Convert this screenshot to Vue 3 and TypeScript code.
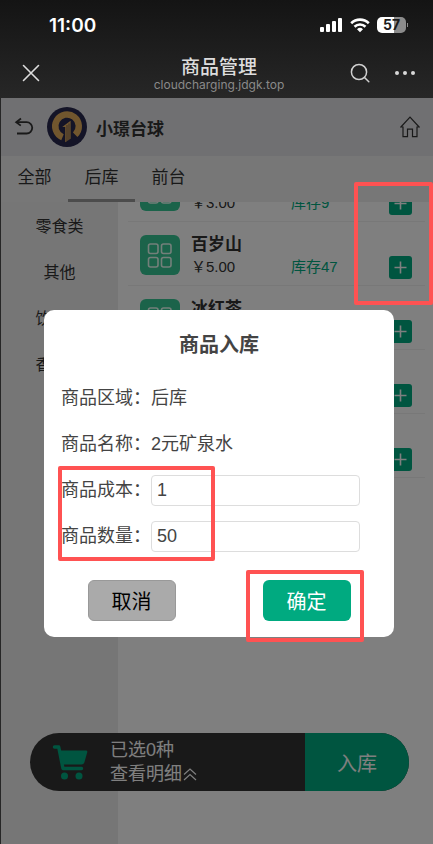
<script setup lang="ts">
import { ref } from 'vue'

interface Product {
  name: string
  price: string
  stock: number
}

const tabs: string[] = ['全部', '后库', '前台']
const activeTab = ref('后库')
const categories: string[] = ['零食类', '其他', '饮料类', '香烟类']
const products: Product[] = [
  { name: '矿泉水', price: '3.00', stock: 9 },
  { name: '百岁山', price: '5.00', stock: 47 },
  { name: '冰红茶', price: '5.00', stock: 20 },
  { name: '可乐', price: '5.00', stock: 20 },
  { name: '雪碧', price: '5.00', stock: 20 },
]
const cost = ref('1')
const quantity = ref('50')
</script>

<template>
  <div class="screen">
    <header class="chrome">
      <div class="status">
        <span class="time">11:00</span>
        <div class="indicators">
          <svg width="24" height="16" viewBox="0 0 24 16" fill="#fff">
            <rect x="1" y="10" width="4" height="5" rx="1" />
            <rect x="7" y="7" width="4" height="8" rx="1" />
            <rect x="13" y="4" width="4" height="11" rx="1" />
            <rect x="19" y="1" width="4" height="14" rx="1" />
          </svg>
          <svg width="20" height="16" viewBox="0 0 20 16" fill="none" stroke="#fff" stroke-width="2.6">
            <path d="M1.2 6.2a12.6 12.6 0 0 1 17.6 0" />
            <path d="M4.5 9.7a7.9 7.9 0 0 1 11 0" />
            <path d="M7 12.2a4.4 4.4 0 0 1 6 0L10 15.2z" fill="#fff" stroke="none" />
          </svg>
          <span class="battery"><span class="level">57</span></span>
        </div>
      </div>
      <div class="nav">
        <button class="plain" aria-label="关闭">
          <svg width="18" height="18" viewBox="0 0 18 18" stroke="#ddd" stroke-width="1.6" stroke-linecap="round">
            <path d="M1.5 1.5l15 15M16.5 1.5l-15 15" />
          </svg>
        </button>
        <div class="heading">
          <h1>商品管理</h1>
          <p>cloudcharging.jdgk.top</p>
        </div>
        <div class="nav-actions">
          <button class="plain" aria-label="搜索">
            <svg width="20" height="20" viewBox="0 0 20 20" fill="none" stroke="#d0d0d0" stroke-width="1.5" stroke-linecap="round">
              <circle cx="9" cy="9" r="7.6" />
              <path d="M14.5 14.5l4.3 4.3" />
            </svg>
          </button>
          <button class="plain" aria-label="更多">
            <svg width="22" height="20" viewBox="0 0 22 20" fill="#d8d8d8">
              <circle cx="3" cy="10" r="2" />
              <circle cx="11" cy="10" r="2" />
              <circle cx="19" cy="10" r="2" />
            </svg>
          </button>
        </div>
      </div>
    </header>

    <main class="page">
      <div class="shop">
        <button class="plain" aria-label="返回">
          <svg width="20" height="20" viewBox="0 0 20 20" fill="none" stroke="#333" stroke-width="1.8">
            <path d="M7 1.5L2.2 5.2l4.6 3.4" />
            <path d="M2.2 5.2h10.4a5.6 5.6 0 0 1 0 11.3H3" />
          </svg>
        </button>
        <svg class="logo" width="40" height="40" viewBox="0 0 40 40">
          <circle cx="20" cy="20" r="20" fill="#28284e" />
          <path d="M15.5 30.2A11.8 11.8 0 1 1 28.2 27.8" fill="none" stroke="#e2ad5c" stroke-width="6.4" />
          <path d="M14.6 19.4L24.6 12v19.5l-7 5V20.6z" fill="#28284e" />
          <path d="M15.2 20L23.6 13.8v18l-5.4 3.4V20z" fill="#e2ad5c" />
          <path d="M20 18v16M22 16.5v16.5" stroke="#28284e" stroke-width="0.6" />
        </svg>
        <strong>小璟台球</strong>
        <a class="home" href="#" aria-label="首页">
          <svg width="20" height="22" viewBox="0 0 20 22" fill="none" stroke="#333" stroke-width="1.2">
            <path d="M3 11H0.9L10 1.2 19.1 11H17v9.7h-4.5v-7.5h-5v7.5H3z" />
          </svg>
        </a>
      </div>

      <nav class="tabs">
        <button v-for="tab in tabs" :key="tab" :class="{ active: tab === activeTab }" @click="activeTab = tab">{{ tab }}</button>
      </nav>

      <div class="content">
        <ul class="categories">
          <li v-for="category in categories" :key="category">{{ category }}</li>
        </ul>
        <div class="viewport">
          <ul class="products">
            <li v-for="product in products" :key="product.name">
              <svg class="thumb" width="40" height="40" viewBox="0 0 40 40" fill="none">
                <rect width="40" height="40" rx="6" fill="#36c694" />
                <g stroke="#e8fff5" stroke-width="1.6">
                  <rect x="8.5" y="9" width="9.5" height="9.5" rx="2" />
                  <rect x="21.5" y="9" width="9.5" height="9.5" rx="2" />
                  <rect x="8.5" y="22.5" width="9.5" height="9.5" rx="2" />
                  <rect x="21.5" y="22.5" width="9.5" height="9.5" rx="2" />
                </g>
              </svg>
              <div class="info">
                <strong>{{ product.name }}</strong>
                <div class="figures">
                  <span>￥{{ product.price }}</span>
                  <span class="stock">库存{{ product.stock }}</span>
                </div>
              </div>
              <button class="add" aria-label="入库">
                <svg width="13" height="13" viewBox="0 0 13 13" stroke="#fff" stroke-width="1.6">
                  <path d="M6.5 0.5v12M0.5 6.5h12" />
                </svg>
              </button>
            </li>
          </ul>
        </div>
      </div>

      <footer class="cart">
        <svg width="36" height="36" viewBox="0 0 36 36">
          <path d="M2.5 3h4.2L11 24.5h18.5" fill="none" stroke="#00aa80" stroke-width="3.4" stroke-linecap="round" stroke-linejoin="round" />
          <path d="M7 6.5h27q1.6 0 1.3 1.6L32.5 18q-.8 2.5-3 2.5H10z" fill="#00aa80" />
          <circle cx="12.5" cy="32" r="3.5" fill="#00aa80" />
          <circle cx="27" cy="32" r="3.5" fill="#00aa80" />
        </svg>
        <div class="summary">
          <span>已选0种</span>
          <a href="#">查看明细<svg width="14" height="14" viewBox="0 0 14 14" fill="none" stroke="#fff" stroke-width="1.2">
            <path d="M1 7.5L7 2l6 5.5M1 13l6-5.5 6 5.5" />
          </svg></a>
        </div>
        <button>入库</button>
      </footer>

      <div class="overlay">
        <form class="dialog" role="dialog" aria-labelledby="dialog-title" @submit.prevent>
          <h2 id="dialog-title">商品入库</h2>
          <div class="field"><span>商品区域：</span><span>后库</span></div>
          <div class="field"><span>商品名称：</span><span>2元矿泉水</span></div>
          <div class="field">
            <label for="cost">商品成本：</label>
            <input id="cost" v-model="cost" type="text" />
          </div>
          <div class="field">
            <label for="quantity">商品数量：</label>
            <input id="quantity" v-model="quantity" type="text" />
          </div>
          <div class="actions">
            <button type="button" class="cancel">取消</button>
            <button type="submit" class="confirm">确定</button>
          </div>
        </form>
      </div>
    </main>

    <i class="mark mark-add"></i>
    <i class="mark mark-fields"></i>
    <i class="mark mark-confirm"></i>
  </div>
</template>

<style>
body {
  background: #262626;
}
</style>

<style scoped>
.screen,
.screen * {
  box-sizing: border-box;
}
.screen {
  position: relative;
  display: flex;
  flex-direction: column;
  min-height: 100vh;
  overflow: hidden;
  color: #333;
  font-family: "Liberation Sans", "Noto Sans CJK SC", sans-serif;
  font-size: 16px;
}
h1,
h2,
p,
ul {
  margin: 0;
  padding: 0;
  list-style: none;
}
button {
  padding: 0;
  border: 0;
  color: inherit;
  font-family: inherit;
  cursor: pointer;
}
a {
  color: inherit;
  text-decoration: none;
}
svg {
  display: block;
  flex: none;
}
.plain {
  background: none;
}

.chrome {
  height: 98px;
  background: linear-gradient(#141414, #272727);
}
.status {
  display: flex;
  align-items: center;
  justify-content: space-between;
  height: 50px;
  padding: 0 27px 0 49px;
}
.time {
  color: #fff;
  font: 600 19px "Inter", sans-serif;
}
.indicators {
  display: flex;
  align-items: center;
  gap: 7px;
}
.battery {
  position: relative;
  width: 29px;
  height: 16px;
  border-radius: 5px;
  background: linear-gradient(90deg, #fff 57%, #8c8c8c 57%);
  color: #1c1c1c;
  font: 700 14px/16px "Inter", sans-serif;
  text-align: center;
}
.battery::after {
  content: "";
  position: absolute;
  top: 6px;
  right: -2px;
  width: 1px;
  height: 4px;
  background: #8c8c8c;
}
.nav {
  display: grid;
  grid-template-columns: 80px 1fr 80px;
  align-items: center;
  height: 46px;
  padding: 0 17px 0 22px;
}
.heading {
  padding-top: 2px;
  text-align: center;
  white-space: nowrap;
}
.heading h1 {
  color: #ddd;
  font-size: 19px;
  font-weight: 500;
  line-height: 22px;
}
.heading p {
  color: #8a8a8a;
  font: 12px/12px "Inter", sans-serif;
}
.nav > .plain {
  justify-self: start;
}
.nav-actions {
  display: flex;
  justify-content: flex-end;
  gap: 24px;
}

.page {
  position: relative;
  display: flex;
  flex: 1;
  flex-direction: column;
  margin-left: 1px;
  background: #fff;
}
.shop {
  display: flex;
  align-items: center;
  height: 58px;
  padding: 0 13px;
  background: #e0e0e4;
}
.logo {
  margin: 0 9px 0 13px;
}
.shop strong {
  font-size: 17px;
}
.home {
  margin-left: auto;
}
.tabs {
  display: flex;
  height: 46px;
  background: #efefef;
}
.tabs button {
  width: 67px;
  border-bottom: 3px solid transparent;
  background: none;
  font-size: 17px;
  line-height: 40px;
}
.tabs .active {
  border-bottom-color: #999;
}
.content {
  display: flex;
  flex: 1;
}
.categories {
  width: 117px;
  padding-top: 2px;
  background: #ededed;
  text-align: center;
  line-height: 46px;
}
.viewport {
  flex: 1;
  overflow: hidden;
}
/* The list rests with its first row partly scrolled under the tabs. */
.products {
  margin-top: -44px;
  padding: 0 8px 0 10px;
}
.products li {
  display: flex;
  align-items: center;
  height: 64px;
  padding: 2px 13px 0 12px;
  border-bottom: 1px solid #f0f0f0;
}
.info {
  flex: 1;
  margin-left: 11px;
}
.info strong {
  display: block;
  font-size: 17px;
  line-height: 24px;
}
.figures {
  display: grid;
  grid-template-columns: 100px 1fr;
  font-size: 15px;
  line-height: 20px;
}
.stock {
  color: #00aa80;
}
.add {
  display: grid;
  place-items: center;
  align-self: flex-end;
  width: 23px;
  height: 23px;
  margin-bottom: 6px;
  border-radius: 3px;
  background: #00aa80;
}
.cart {
  position: absolute;
  right: 24px;
  bottom: 53px;
  left: 29px;
  display: flex;
  align-items: center;
  height: 58px;
  padding-left: 22px;
  overflow: hidden;
  border-radius: 29px;
  background: #333;
  color: #fff;
}
.summary {
  flex: 1;
  margin-left: 22px;
  font-size: 18px;
  line-height: 24px;
}
.summary span {
  display: block;
}
.summary a {
  display: flex;
  align-items: center;
  gap: 1px;
}
.cart button {
  align-self: stretch;
  width: 104px;
  background: #00aa80;
  font-size: 20px;
}

.overlay {
  position: absolute;
  inset: 0;
  padding: 212px 39px 0 43px;
  background: rgba(0, 0, 0, 0.5);
}
.dialog {
  padding: 12px 0 16px;
  border-radius: 10px;
  background: #fff;
  color: #444;
}
.dialog h2 {
  margin-bottom: 6px;
  font-size: 20px;
  line-height: 47px;
  text-align: center;
}
.field {
  display: flex;
  align-items: center;
  height: 46px;
  padding: 0 34px 0 17px;
  font-size: 18px;
  line-height: 24px;
}
.field input {
  flex: 1;
  min-width: 0;
  height: 31px;
  padding: 0 5px;
  border: 1px solid #ddd;
  border-radius: 4px;
  background: #fff;
  color: #444;
  font: inherit;
}
.actions {
  display: flex;
  justify-content: space-around;
  padding-top: 21px;
}
.actions button {
  width: 88px;
  height: 41px;
  border-radius: 6px;
  font-size: 20px;
}
.actions .cancel {
  border: 1px solid #999;
  background: #aaa;
  color: #000;
}
.actions .confirm {
  background: #00aa80;
  color: #fff;
}

/* Highlight frames laid over the screen. */
.mark {
  position: absolute;
  border: 4px solid #ff5252;
  border-radius: 2px;
  pointer-events: none;
}
.mark-add {
  top: 182px;
  right: 0;
  width: 79px;
  height: 123px;
}
.mark-fields {
  top: 466px;
  left: 58px;
  width: 157px;
  height: 95px;
}
.mark-confirm {
  top: 570px;
  left: 246px;
  width: 118px;
  height: 72px;
}
</style>
